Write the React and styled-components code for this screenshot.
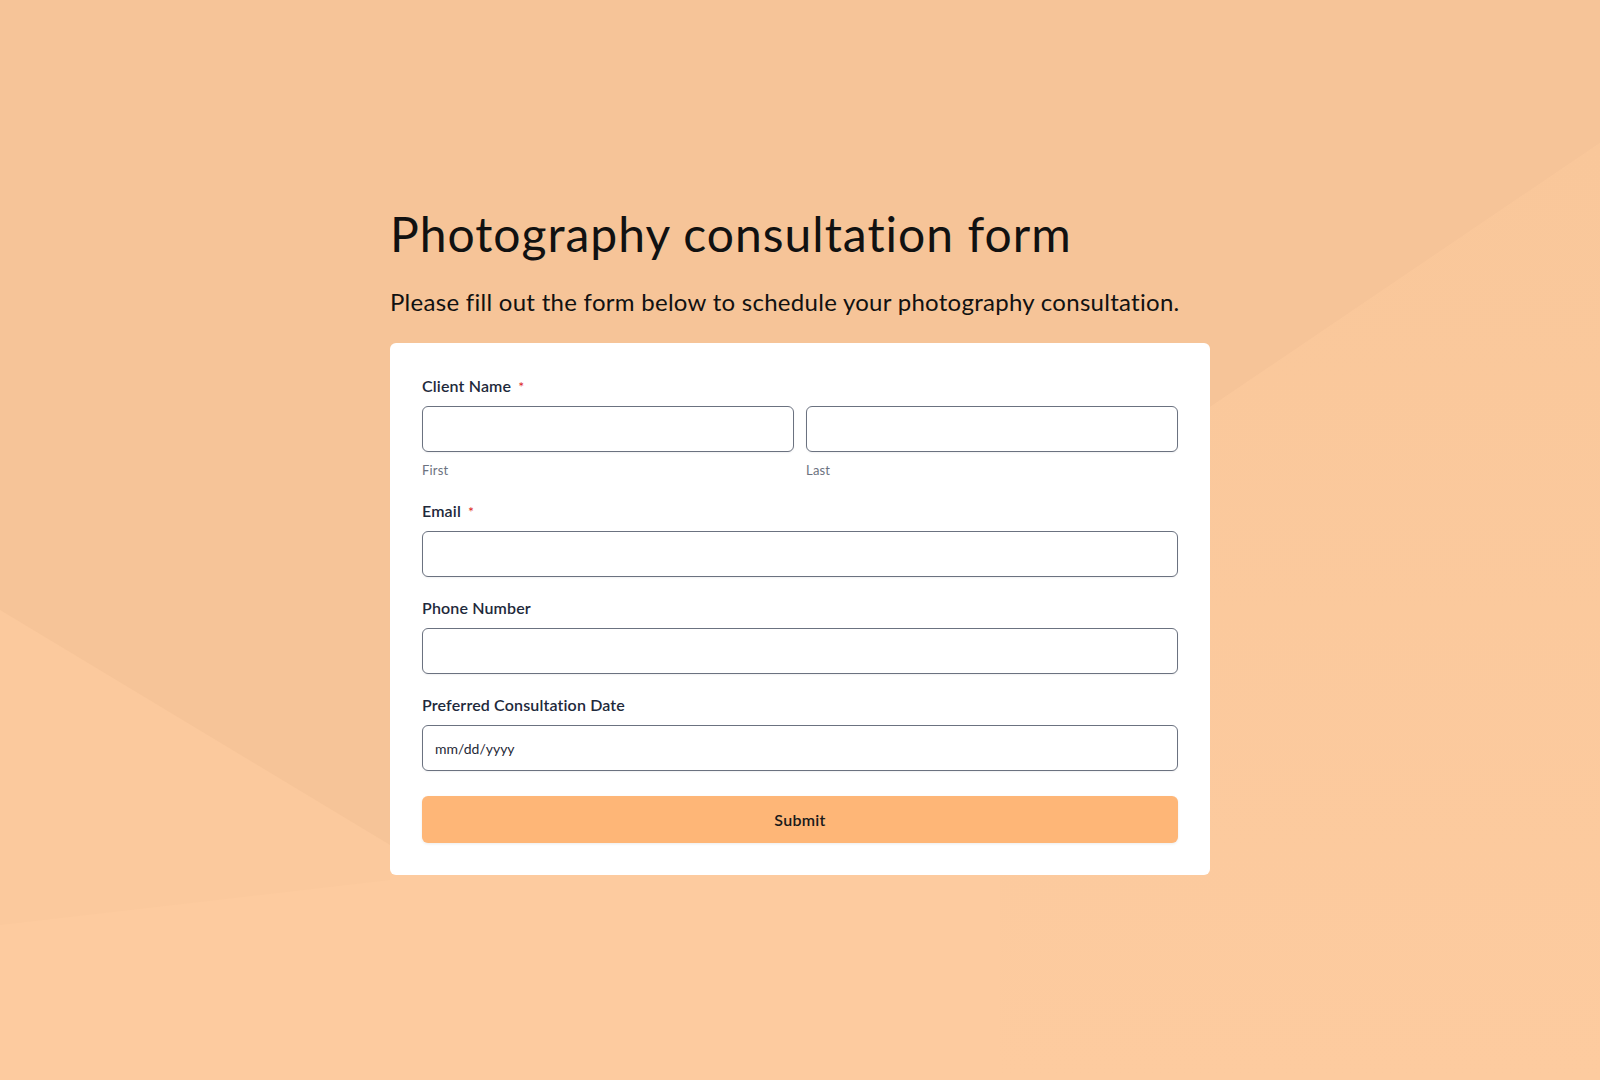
import React from 'react';
import styled, { createGlobalStyle } from 'styled-components';

const GlobalStyle = createGlobalStyle`
  * {
    box-sizing: border-box;
  }

  body {
    margin: 0;
    font-family: Lato, "Open Sans", "Liberation Sans", sans-serif;
    background: #fccb9f;
  }
`;

// low-poly peach backdrop behind the form
const FacetBackdrop = () => (
  <Backdrop viewBox="0 0 1600 1080" preserveAspectRatio="none" aria-hidden="true">
    <defs>
      <linearGradient id="facetRight" x1="0" y1="0" x2="0" y2="1">
        <stop offset="0" stopColor="#f9c79a" />
        <stop offset="1" stopColor="#fdcb9f" />
      </linearGradient>
    </defs>
    <rect x="0" y="0" width="1600" height="1080" fill="#fdcb9f" />
    <polygon points="1210,407 1600,143 1600,1080 1000,1080 1000,860" fill="url(#facetRight)" />
    <polygon points="0,610 390,845 390,880 0,925" fill="#fbc99d" />
    <polygon points="0,0 1600,0 1600,143 1210,407 1000,860 390,845 0,610" fill="#f6c498" />
  </Backdrop>
);

const Field = ({ label, required, children }) => (
  <FieldBlock>
    <Label>
      {label}
      {required && <Star>*</Star>}
    </Label>
    {children}
  </FieldBlock>
);

const App = () => {
  return (
    <>
      <GlobalStyle />
      <Page>
        <FacetBackdrop />
        <Column>
          <Title>Photography consultation form</Title>
          <Intro>Please fill out the form below to schedule your photography consultation.</Intro>
          <Card onSubmit={(e) => e.preventDefault()}>
            <Field label="Client Name" required>
              <NameRow>
                <NamePart>
                  <TextInput type="text" />
                  <SubLabel>First</SubLabel>
                </NamePart>
                <NamePart>
                  <TextInput type="text" />
                  <SubLabel>Last</SubLabel>
                </NamePart>
              </NameRow>
            </Field>
            <Field label="Email" required>
              <TextInput type="email" />
            </Field>
            <Field label="Phone Number">
              <TextInput type="tel" />
            </Field>
            <Field label="Preferred Consultation Date">
              <TextInput type="text" placeholder="mm/dd/yyyy" />
            </Field>
            <SubmitButton type="submit">Submit</SubmitButton>
          </Card>
        </Column>
      </Page>
    </>
  );
};

const Page = styled.div`
  position: relative;
  min-height: 100vh;
  display: flex;
  justify-content: center;
  padding-top: 205px;
  overflow: hidden;
`;

const Backdrop = styled.svg`
  position: absolute;
  inset: 0;
  width: 100%;
  height: 100%;
  z-index: 0;
`;

const Column = styled.div`
  position: relative;
  z-index: 1;
  width: 820px;
  display: flex;
  flex-direction: column;
`;

const Title = styled.h1`
  margin: 0 0 25px;
  font-size: 48px;
  line-height: 1.2;
  font-weight: 400;
  letter-spacing: 1px;
  color: #111111;
`;

const Intro = styled.p`
  margin: 0 0 27px;
  font-size: 24px;
  line-height: 1.2;
  letter-spacing: 0.28px;
  color: #111111;
`;

const Card = styled.form`
  background: #ffffff;
  border-radius: 6px;
  padding: 31px 32px 32px;
  display: flex;
  flex-direction: column;
  gap: 19px;
`;

const FieldBlock = styled.div`
  display: flex;
  flex-direction: column;
`;

const Label = styled.label`
  height: 24px;
  font-size: 16px;
  line-height: 24px;
  font-weight: 600;
  letter-spacing: 0.15px;
  color: #1e293b;
  margin-bottom: 8px;
`;

const Star = styled.span`
  color: #dc2626;
  font-size: 14px;
  line-height: 0;
  font-weight: 400;
  margin-left: 7px;
`;

const NameRow = styled.div`
  display: grid;
  grid-template-columns: 1fr 1fr;
  gap: 12px;
`;

const NamePart = styled.div`
  display: flex;
  flex-direction: column;
`;

const TextInput = styled.input`
  height: 46px;
  width: 100%;
  padding: 0 12px;
  border: 1px solid #6b7280;
  border-radius: 6px;
  background: #ffffff;
  box-shadow: 0 1px 2px rgba(15, 23, 42, 0.06);
  font-family: Lato, "Liberation Sans", sans-serif;
  font-size: 14px;
  color: #1f2937;
  outline: none;

  &::placeholder {
    color: #1f2937;
    opacity: 1;
  }
`;

const SubLabel = styled.span`
  margin-top: 8px;
  font-size: 13px;
  line-height: 20px;
  letter-spacing: 0.2px;
  color: #6b7280;
`;

const SubmitButton = styled.button`
  margin-top: 6px;
  height: 47px;
  border: none;
  border-radius: 6px;
  background: #feb677;
  box-shadow: 0 1px 3px rgba(0, 0, 0, 0.08);
  font-family: Lato, "Liberation Sans", sans-serif;
  font-size: 16px;
  font-weight: 600;
  letter-spacing: 0.3px;
  color: #1a1a1a;
  cursor: pointer;
`;

export default App;
